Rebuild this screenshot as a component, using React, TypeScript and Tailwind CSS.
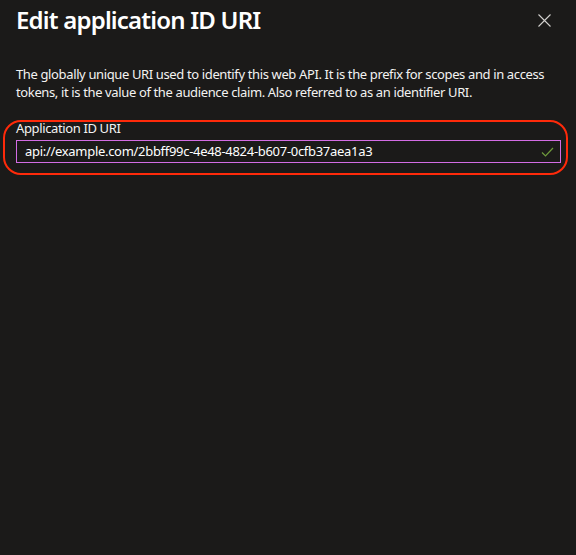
import React from "react";

const font = { fontFamily: '"Noto Sans", "Open Sans", sans-serif' };

export default function App() {
  return (
    <div className="w-[576px] h-[555px] bg-[#1b1a19] text-[#f3f2f1] overflow-hidden" style={font}>
      <div className="flex items-start justify-between pl-4 pr-[25px] pt-[1px]">
        <h1 className="text-[24px] leading-[38px] font-semibold tracking-[-0.8px] text-white">Edit application ID URI</h1>
        <button className="mt-[13px] text-[#d2d0ce]" aria-label="Close">
          <svg width="13" height="13" viewBox="0 0 13 13" fill="none" stroke="currentColor" strokeWidth="1.1">
            <path d="M0.5 0.5L12.5 12.5M12.5 0.5L0.5 12.5" />
          </svg>
        </button>
      </div>
      <p className="px-4 mt-[26px] text-[13px] leading-[18px] tracking-[-0.37px]">
        The globally unique URI used to identify this web API. It is the prefix for scopes and in access tokens, it is
        the value of the audience claim. Also referred to as an identifier URI.
      </p>
      <div className="mx-[3px] mt-[19px] w-[565px] rounded-[18px] border-2 border-[#ff2a0a] pl-[11px] pr-[5px] pb-[10px]">
        <label className="block text-[13px] leading-[13px] mb-[5px] tracking-[-0.37px]">Application ID URI</label>
        <div className="flex h-[23px] items-center border border-[#d36ce4] pl-2 pr-[6px]">
          <span className="flex-1 text-[13px] tracking-[-0.3px] text-white">
            api://example.com/2bbff99c-4e48-4824-b607-0cfb37aea1a3
          </span>
          <svg width="13" height="10" viewBox="0 0 13 10" fill="none" stroke="#6f9a3c" strokeWidth="1.2">
            <path d="M1 5.5L4.5 9L12 1" />
          </svg>
        </div>
      </div>
    </div>
  );
}
